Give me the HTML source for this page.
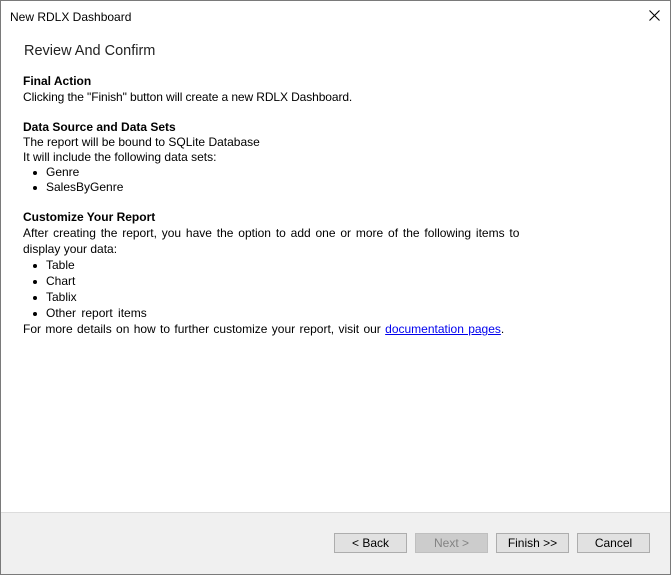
<!DOCTYPE html>
<html><head><style>
body{margin:0;width:671px;height:575px;position:relative;background:#fff;font-family:"Liberation Sans",sans-serif;font-size:12px;color:#000;overflow:hidden}
.win{position:absolute;left:0;top:0;width:669px;height:573px;border:1px solid #7a7a7a;background:#fff}
.l{position:absolute;left:23px;white-space:nowrap;line-height:14px}
.b{font-weight:bold}
.bul{left:35px}
.bul::before{content:"";position:absolute;left:-2px;top:6px;width:4px;height:4px;border-radius:50%;background:#000}
.bul span{margin-left:11px}
.foot{position:absolute;left:1px;top:512px;width:669px;height:61px;background:#f0f0f0;border-top:1px solid #dcdcdc}
.btn{position:absolute;top:533px;width:71px;height:18px;border:1px solid #adadad;background:#e1e1e1;text-align:center;line-height:18px;font-size:12px}
</style></head><body>
<div class="win"></div>
<div class="l" style="left:10px;top:10px">New RDLX Dashboard</div>
<svg style="position:absolute;left:649px;top:10px" width="11" height="11"><path d="M0.5 0.5L10.5 10.5M10.5 0.5L0.5 10.5" stroke="#000" stroke-width="1.1"/></svg>
<div class="l" style="left:24px;top:43px;font-size:14.5px;line-height:17px;color:#222">Review And Confirm</div>
<div class="l b" style="top:74px">Final Action</div>
<div class="l" style="top:90px;letter-spacing:-0.1px">Clicking the "Finish" button will create a new RDLX Dashboard.</div>
<div class="l b" style="top:120px">Data Source and Data Sets</div>
<div class="l" style="top:135px">The report will be bound to SQLite Database</div>
<div class="l" style="top:150px">It will include the following data sets:</div>
<div class="l bul" style="top:165px"><span>Genre</span></div>
<div class="l bul" style="top:180px"><span>SalesByGenre</span></div>
<div class="l b" style="top:210px">Customize Your Report</div>
<div class="l" style="top:226px;word-spacing:1.5px">After creating the report, you have the option to add one or more of the following items to</div>
<div class="l" style="top:242px">display your data:</div>
<div class="l bul" style="top:258px"><span>Table</span></div>
<div class="l bul" style="top:274px"><span>Chart</span></div>
<div class="l bul" style="top:290px"><span>Tablix</span></div>
<div class="l bul" style="top:306px"><span style="word-spacing:2px">Other report items</span></div>
<div class="l" style="top:322px;word-spacing:1px">For more details on how to further customize your report, visit our <span style="color:#0000ee;text-decoration:underline">documentation pages</span>.</div>
<div class="foot"></div>
<div class="btn" style="left:334px">&lt; Back</div>
<div class="btn" style="left:415px;background:#cccccc;border-color:#bfbfbf;color:#838383">Next &gt;</div>
<div class="btn" style="left:496px">Finish &gt;&gt;</div>
<div class="btn" style="left:577px">Cancel</div>
</body></html>
